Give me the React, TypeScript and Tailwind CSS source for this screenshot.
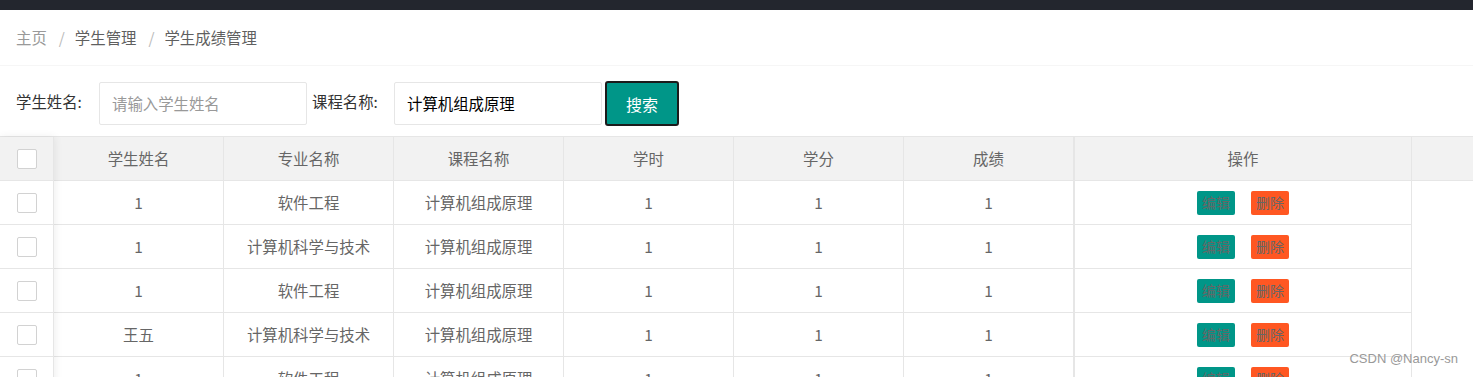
import React from "react";

const rows = [
	{ name: "1", major: "软件工程" },
	{ name: "1", major: "计算机科学与技术" },
	{ name: "1", major: "软件工程" },
	{ name: "王五", major: "计算机科学与技术" },
	{ name: "1", major: "软件工程" },
];

const headers = ["学生姓名", "专业名称", "课程名称", "学时", "学分", "成绩"];

const Checkbox: React.FC = () => (
	<span className="block w-5 h-5 bg-white border border-[#d2d2d2] rounded-[2px]" />
);

const App: React.FC = () => {
	return (
		<div
			className="relative w-[1473px] h-[377px] overflow-hidden bg-white text-[15.4px] text-[#666]"
			style={{ fontFamily: '"Noto Sans CJK SC", "Noto Sans", sans-serif' }}
		>
			<div className="h-[10px] bg-[#23262e]" />

			{/* breadcrumb */}
			<div className="h-[56px] flex items-center px-4 border-b border-[#f6f6f6]">
				<span className="text-[#999]">主页</span>
				<span className="ml-[12px] mr-[10px] text-[#bbb]">/</span>
				<span className="text-[#5f5f5f]">学生管理</span>
				<span className="ml-[12px] mr-[10px] text-[#bbb]">/</span>
				<span className="text-[#5f5f5f]">学生成绩管理</span>
			</div>

			{/* search bar */}
			<div className="h-[70px] pt-[15px] flex items-start pl-4">
				<span className="w-[83px] mt-[9px] text-[#333]">学生姓名:</span>
				<div className="mt-[1px] w-[208px] h-[43px] border border-[#e6e6e6] rounded-[2px] flex items-center pl-[12px] text-[#999]">
					请输入学生姓名
				</div>
				<span className="ml-[5px] w-[82px] mt-[9px] text-[#333]">课程名称:</span>
				<div className="mt-[1px] w-[208px] h-[43px] border border-[#e6e6e6] rounded-[2px] flex items-center pl-[12px] text-black">
					计算机组成原理
				</div>
				<button className="ml-[3px] w-[74px] h-[45px] bg-[#009688] border-2 border-[#1b1b1b] rounded-[3px] text-white text-[16px]">
					搜索
				</button>
			</div>

			{/* table */}
			<div className="flex border-t border-[#e6e6e6]">
				{/* fixed left */}
				<div className="relative z-10 w-[54px] shrink-0 border-r border-[#e6e6e6] bg-white shadow-[1px_0_8px_rgba(0,0,0,0.07)]">
					<div className="h-[44px] bg-[#f2f2f2] border-b border-[#e6e6e6] flex items-center pl-[17px]">
						<Checkbox />
					</div>
					{rows.map((_, i) => (
						<div
							key={i}
							className="h-[44px] border-b border-[#e6e6e6] flex items-center pl-[17px]"
						>
							<Checkbox />
						</div>
					))}
				</div>

				{/* main */}
				<div className="shrink-0">
					<div className="flex h-[44px] bg-[#f2f2f2] border-b border-[#e6e6e6]">
						{headers.map((h) => (
							<div
								key={h}
								className="w-[170px] border-r border-[#e6e6e6] flex items-center justify-center"
							>
								{h}
							</div>
						))}
					</div>
					{rows.map((r, i) => (
						<div key={i} className="flex h-[44px] border-b border-[#e6e6e6]">
							{[r.name, r.major, "计算机组成原理", "1", "1", "1"].map((c, j) => (
								<div
									key={j}
									className="w-[170px] border-r border-[#e6e6e6] flex items-center justify-center"
								>
									{c}
								</div>
							))}
						</div>
					))}
				</div>

				{/* fixed right */}
				<div className="flex-1">
					<div className="flex h-[44px] bg-[#f2f2f2] border-b border-[#e6e6e6]">
						<div className="w-[338px] border-l border-r border-[#e6e6e6] flex items-center justify-center">
							操作
						</div>
						<div className="flex-1" />
					</div>
					{rows.map((_, i) => (
						<div key={i} className="flex h-[44px]">
							<div className="w-[338px] border-l border-r border-b border-[#e6e6e6] flex items-center justify-center gap-4">
								<span className="w-[38px] h-[24px] bg-[#009688] rounded-[2px] flex items-center justify-center text-[14px] text-[#666]">
									编辑
								</span>
								<span className="w-[38px] h-[24px] bg-[#ff5722] rounded-[2px] flex items-center justify-center text-[14px] text-[#666]">
									删除
								</span>
							</div>
						</div>
					))}
				</div>
			</div>

			<span
				className="absolute right-[15px] bottom-[9px] text-[13px] text-[#999]"
				style={{ fontFamily: '"Liberation Sans", Arial, sans-serif' }}
			>
				CSDN @Nancy-sn
			</span>
		</div>
	);
};

export default App;
